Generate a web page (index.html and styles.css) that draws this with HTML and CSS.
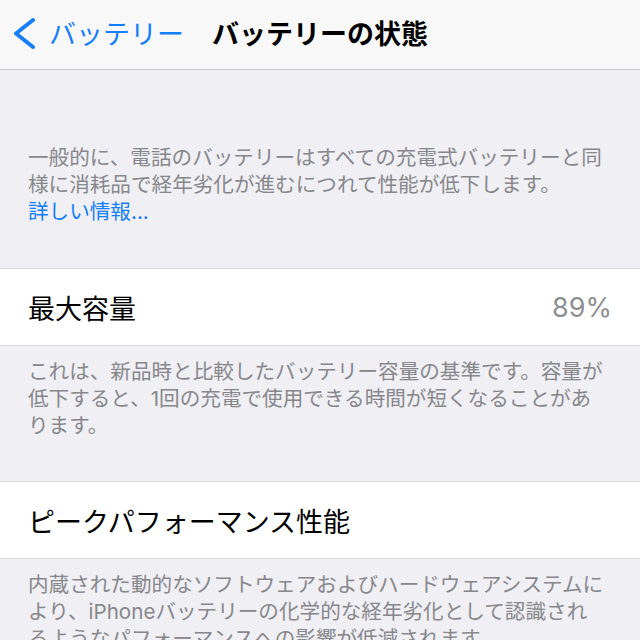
FILE: index.html
```html
<!DOCTYPE html>
<html lang="ja">
<head>
    <meta charset="UTF-8">
    <meta name="viewport" content="width=device-width, initial-scale=1.0">
    <title>バッテリーの状態</title>
    <link rel="stylesheet" href="styles.css">
</head>
<body>
    <div class="navbar">
        <div class="nav-back">
            <svg class="chevron" width="22" height="32" viewBox="0 0 22 32">
                <polyline points="20,3 3,16.5 20,30" fill="none" stroke="#147efb" stroke-width="4" stroke-linecap="round" stroke-linejoin="round"/>
            </svg>
            <span class="back-label">バッテリー</span>
        </div>
        <div class="nav-title">バッテリーの状態</div>
        <div></div>
    </div>

    <div class="section-note first">
        一般的に、電話のバッテリーはすべての充電式バッテリーと同<br>
        様に消耗品で経年劣化が進むにつれて性能が低下します。<br>
        <span class="link">詳しい情報...</span>
    </div>

    <div class="row">
        <div class="row-title">最大容量</div>
        <div class="row-value">89%</div>
    </div>

    <div class="section-note">
        これは、新品時と比較したバッテリー容量の基準です。容量が<br>
        低下すると、1回の充電で使用できる時間が短くなることがあ<br>
        ります。
    </div>

    <div class="row">
        <div class="row-title">ピークパフォーマンス性能</div>
    </div>

    <div class="section-note">
        内蔵された動的なソフトウェアおよびハードウェアシステムに<br>
        より、iPhoneバッテリーの化学的な経年劣化として認識され<br>
        るようなパフォーマンスへの影響が低減されます。
    </div>
</body>
</html>
```

FILE: styles.css
```css
body{
    margin: 0;
    background-color: #efeff4;
    font-family: "Inter", "Noto Sans CJK JP", sans-serif;
    color: #000;
}

/***************** -navbar- *******************/

.navbar{
    height: 69px;
    background-color: #f8f8f8;
    border-bottom: 1px solid #cbcbcf;
    display: grid;
    grid-template-columns: 1fr auto 1fr;
    align-items: center;
    padding-bottom: 4px;
    box-sizing: border-box;
    height: 70px;
}
.nav-back{
    display: flex;
    align-items: center;
    padding-left: 13px;
}
.back-label{
    margin-left: 14px;
    font-size: 27px;
    color: #147efb;
    white-space: nowrap;
}
.nav-title{
    font-size: 27px;
    font-weight: 700;
    white-space: nowrap;
}

/***************** -list- *******************/

.section-note{
    padding: 12px 20px 42px 28px;
    font-size: 20.6px;
    line-height: 27px;
    color: #87878b;
    white-space: nowrap;
}
.section-note.first{
    padding-top: 74px;
    padding-bottom: 43px;
}
.link{
    color: #147efb;
}
.row{
    height: 76px;
    background-color: #fff;
    border-top: 1px solid #d9d9dd;
    border-bottom: 1px solid #d9d9dd;
    display: flex;
    align-items: center;
    justify-content: space-between;
    padding: 0 28px;
}
.row-title{
    font-size: 27px;
}
.row-value{
    font-size: 27px;
    color: #8e8e93;
}
```
